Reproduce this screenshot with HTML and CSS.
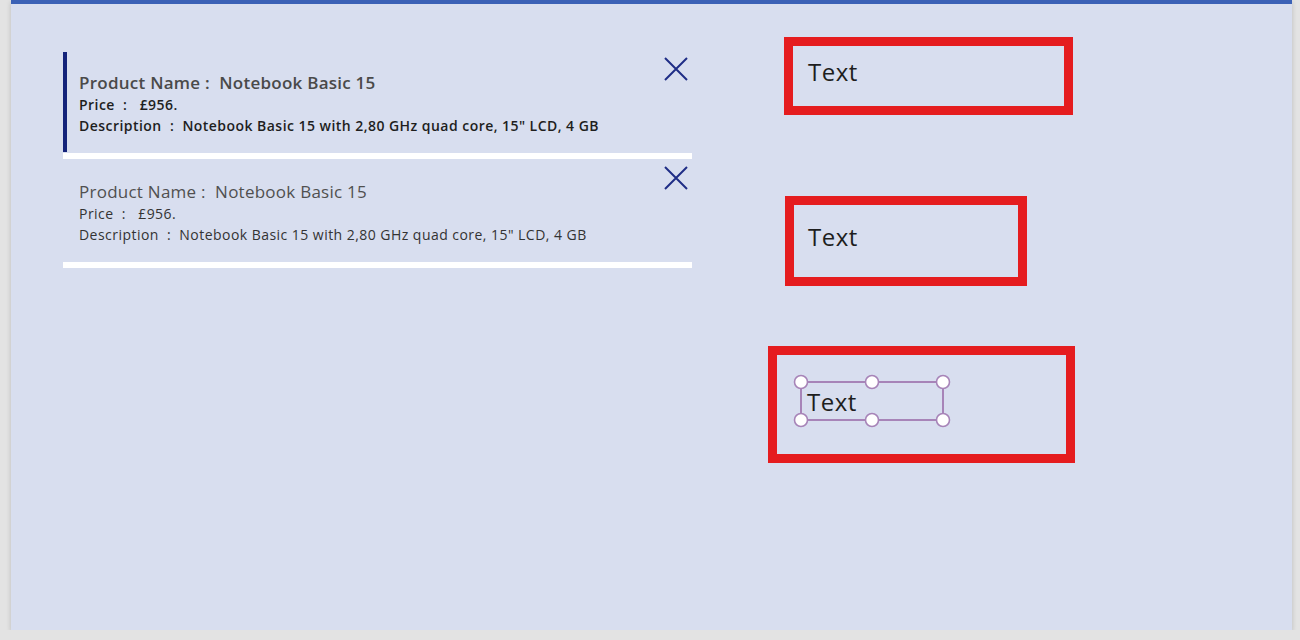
FILE: index.html
```html
<!DOCTYPE html>
<html>
<head>
<meta charset="utf-8">
<link rel="stylesheet" href="styles.css">
</head>
<body>
<div class="canvas">
  <div class="gallery">
    <div class="item selected">
      <div class="sel-bar"></div>
      <div class="lines">
        <div class="name">Product Name :&nbsp; Notebook Basic 15</div>
        <div class="meta">Price&nbsp; :&nbsp;&nbsp; £956.</div>
        <div class="meta">Description&nbsp; :&nbsp; Notebook Basic 15 with 2,80 GHz quad core, 15" LCD, 4 GB</div>
      </div>
      <svg class="close" viewBox="0 0 24 24"><path d="M1 1 L23 23 M23 1 L1 23" /></svg>
    </div>
    <div class="sep"></div>
    <div class="item">
      <div class="lines">
        <div class="name">Product Name :&nbsp; Notebook Basic 15</div>
        <div class="meta">Price&nbsp; :&nbsp;&nbsp; £956.</div>
        <div class="meta">Description&nbsp; :&nbsp; Notebook Basic 15 with 2,80 GHz quad core, 15" LCD, 4 GB</div>
      </div>
      <svg class="close" viewBox="0 0 24 24"><path d="M1 1 L23 23 M23 1 L1 23" /></svg>
    </div>
    <div class="sep"></div>
  </div>

  <div class="tbox box1"><span class="label">Text</span></div>
  <div class="tbox box2"><span class="label">Text</span></div>
  <div class="tbox box3"><span class="label">Text</span></div>

  <svg class="selection" width="160" height="54" viewBox="0 0 160 54">
    <rect x="8" y="8" width="142" height="38" fill="none" stroke="#a784b8" stroke-width="2"/>
    <circle cx="8" cy="8" r="6.5"/>
    <circle cx="79" cy="8" r="6.5"/>
    <circle cx="150" cy="8" r="6.5"/>
    <circle cx="8" cy="46" r="6.5"/>
    <circle cx="79" cy="46" r="6.5"/>
    <circle cx="150" cy="46" r="6.5"/>
  </svg>
</div>
</body>
</html>
```

FILE: styles.css
```css
html, body {
  margin: 0;
  padding: 0;
  background: #e3e3e3;
  font-family: "Open Sans", "Noto Sans", sans-serif;
}

.canvas {
  position: relative;
  margin-left: 11px;
  width: 1281px;
  height: 626px;
  background: #d8deef;
  border-top: 4px solid #3b61b6;
  box-shadow: 0 2px 5px rgba(0, 0, 0, 0.18);
}

.gallery {
  position: absolute;
  left: 52px;
  top: 46px;
  width: 629px;
  display: flex;
  flex-direction: column;
}

.item {
  position: relative;
  height: 103px;
  box-sizing: border-box;
  padding: 22px 0 0 16px;
}

.sel-bar {
  position: absolute;
  left: 0;
  top: 2px;
  bottom: 1px;
  width: 4px;
  background: #14237a;
}

.sep {
  height: 6px;
  background: #ffffff;
}

.lines {
  display: flex;
  flex-direction: column;
}

.name {
  font-size: 17px;
  line-height: 22px;
  letter-spacing: 0.25px;
  color: #505050;
  white-space: nowrap;
}

.meta {
  font-size: 14px;
  line-height: 21px;
  letter-spacing: 0.46px;
  color: #333333;
  white-space: nowrap;
}

.selected .name {
  font-weight: 600;
  color: #4a4a4a;
}

.selected .meta {
  font-weight: 600;
  color: #1e1e1e;
}

.close {
  position: absolute;
  left: 601px;
  top: 7px;
  width: 24px;
  height: 24px;
  fill: none;
  stroke: #1f2d86;
  stroke-width: 2;
}

.tbox {
  position: absolute;
  box-sizing: border-box;
  border: 9px solid #e51c1f;
}

.label {
  display: block;
  font-size: 24px;
  line-height: 30px;
  letter-spacing: 0.5px;
  color: #1e1e1e;
}

.box1 {
  left: 773px;
  top: 33px;
  width: 289px;
  height: 78px;
  padding: 11px 0 0 15px;
}

.box2 {
  left: 774px;
  top: 192px;
  width: 242px;
  height: 90px;
  padding: 17px 0 0 14px;
}

.box3 {
  left: 757px;
  top: 342px;
  width: 307px;
  height: 117px;
  padding: 32px 0 0 30px;
}

.selection {
  position: absolute;
  left: 782px;
  top: 370px;
}

.selection circle {
  fill: #ffffff;
  stroke: #a784b8;
  stroke-width: 1.6;
}
```
